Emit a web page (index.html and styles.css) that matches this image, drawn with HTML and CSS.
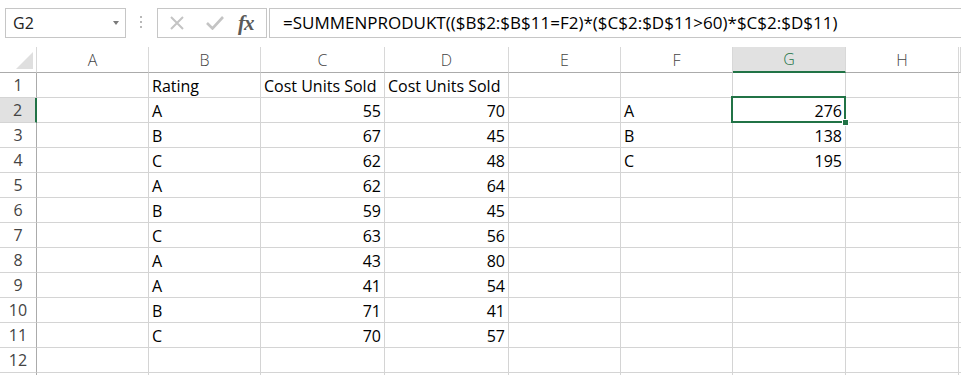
FILE: index.html
```html
<!DOCTYPE html>
<html lang="de">
<head>
    <meta charset="UTF-8">
    <title>SUMMENPRODUKT</title>
    <link rel="stylesheet" href="styles.css">
</head>
<body>

    <!-- Formula bar -->
    <div class="formula-bar">
        <div class="name-box">
            <span>G2</span>
            <span class="drop-arrow"></span>
        </div>
        <div class="grip"><i></i><i></i><i></i></div>
        <div class="fx-buttons">
            <svg class="btn-cancel" width="14" height="14" viewBox="0 0 14 14">
                <path d="M1 1 L13 13 M13 1 L1 13" stroke="#c4c4c4" stroke-width="2" fill="none"/>
            </svg>
            <svg class="btn-enter" width="18" height="14" viewBox="0 0 18 14">
                <path d="M1 7 L6.5 12.5 L17 1" stroke="#c4c4c4" stroke-width="2.6" fill="none"/>
            </svg>
            <span class="btn-fx">fx</span>
        </div>
        <div class="formula-input">=SUMMENPRODUKT(($B$2:$B$11=F2)*($C$2:$D$11&gt;60)*$C$2:$D$11)</div>
    </div>

    <!-- Sheet -->
    <div class="sheet">
        <div class="row head-row">
            <div class="corner"><span class="corner-tri"></span></div>
            <div class="col-head">A</div>
            <div class="col-head">B</div>
            <div class="col-head">C</div>
            <div class="col-head">D</div>
            <div class="col-head">E</div>
            <div class="col-head">F</div>
            <div class="col-head active">G</div>
            <div class="col-head">H</div>
            <div class="col-head"></div>
        </div>
        <div class="row">
            <div class="row-head">1</div>
            <div class="cell"></div>
            <div class="cell">Rating</div>
            <div class="cell">Cost Units Sold</div>
            <div class="cell">Cost Units Sold</div>
            <div class="cell"></div><div class="cell"></div><div class="cell"></div><div class="cell"></div><div class="cell"></div>
        </div>
        <div class="row">
            <div class="row-head active">2</div>
            <div class="cell"></div>
            <div class="cell">A</div>
            <div class="cell num">55</div>
            <div class="cell num">70</div>
            <div class="cell"></div>
            <div class="cell">A</div>
            <div class="cell num selected">276</div>
            <div class="cell"></div><div class="cell"></div>
        </div>
        <div class="row">
            <div class="row-head">3</div>
            <div class="cell"></div>
            <div class="cell">B</div>
            <div class="cell num">67</div>
            <div class="cell num">45</div>
            <div class="cell"></div>
            <div class="cell">B</div>
            <div class="cell num">138</div>
            <div class="cell"></div><div class="cell"></div>
        </div>
        <div class="row">
            <div class="row-head">4</div>
            <div class="cell"></div>
            <div class="cell">C</div>
            <div class="cell num">62</div>
            <div class="cell num">48</div>
            <div class="cell"></div>
            <div class="cell">C</div>
            <div class="cell num">195</div>
            <div class="cell"></div><div class="cell"></div>
        </div>
        <div class="row">
            <div class="row-head">5</div>
            <div class="cell"></div>
            <div class="cell">A</div>
            <div class="cell num">62</div>
            <div class="cell num">64</div>
            <div class="cell"></div><div class="cell"></div><div class="cell"></div><div class="cell"></div><div class="cell"></div>
        </div>
        <div class="row">
            <div class="row-head">6</div>
            <div class="cell"></div>
            <div class="cell">B</div>
            <div class="cell num">59</div>
            <div class="cell num">45</div>
            <div class="cell"></div><div class="cell"></div><div class="cell"></div><div class="cell"></div><div class="cell"></div>
        </div>
        <div class="row">
            <div class="row-head">7</div>
            <div class="cell"></div>
            <div class="cell">C</div>
            <div class="cell num">63</div>
            <div class="cell num">56</div>
            <div class="cell"></div><div class="cell"></div><div class="cell"></div><div class="cell"></div><div class="cell"></div>
        </div>
        <div class="row">
            <div class="row-head">8</div>
            <div class="cell"></div>
            <div class="cell">A</div>
            <div class="cell num">43</div>
            <div class="cell num">80</div>
            <div class="cell"></div><div class="cell"></div><div class="cell"></div><div class="cell"></div><div class="cell"></div>
        </div>
        <div class="row">
            <div class="row-head">9</div>
            <div class="cell"></div>
            <div class="cell">A</div>
            <div class="cell num">41</div>
            <div class="cell num">54</div>
            <div class="cell"></div><div class="cell"></div><div class="cell"></div><div class="cell"></div><div class="cell"></div>
        </div>
        <div class="row">
            <div class="row-head">10</div>
            <div class="cell"></div>
            <div class="cell">B</div>
            <div class="cell num">71</div>
            <div class="cell num">41</div>
            <div class="cell"></div><div class="cell"></div><div class="cell"></div><div class="cell"></div><div class="cell"></div>
        </div>
        <div class="row">
            <div class="row-head">11</div>
            <div class="cell"></div>
            <div class="cell">C</div>
            <div class="cell num">70</div>
            <div class="cell num">57</div>
            <div class="cell"></div><div class="cell"></div><div class="cell"></div><div class="cell"></div><div class="cell"></div>
        </div>
        <div class="row">
            <div class="row-head">12</div>
            <div class="cell"></div><div class="cell"></div><div class="cell"></div><div class="cell"></div>
            <div class="cell"></div><div class="cell"></div><div class="cell"></div><div class="cell"></div><div class="cell"></div>
        </div>
        <div class="row">
            <div class="row-head"></div>
            <div class="cell"></div><div class="cell"></div><div class="cell"></div><div class="cell"></div>
            <div class="cell"></div><div class="cell"></div><div class="cell"></div><div class="cell"></div><div class="cell"></div>
        </div>
    </div>

</body>
</html>
```

FILE: styles.css
```css
/* Global */
body {
    margin: 0;
    padding: 0;
    background-color: #ffffff;
    font-family: 'Open Sans', 'Noto Sans', sans-serif;
    font-size: 16px;
    color: #000;
    overflow: hidden;
}

/* Formula bar */
.formula-bar {
    display: flex;
    align-items: flex-start;
    height: 47px;
    box-sizing: border-box;
    padding-top: 8px;
}

.name-box {
    display: flex;
    align-items: center;
    justify-content: space-between;
    box-sizing: border-box;
    width: 121px;
    height: 30px;
    margin-left: 5px;
    padding: 0 6px 0 7px;
    border: 1px solid #c6c6c6;
    color: #222;
}

.drop-arrow {
    width: 0;
    height: 0;
    border-left: 3px solid transparent;
    border-right: 3px solid transparent;
    border-top: 4px solid #7a7a7a;
}

.grip {
    display: flex;
    flex-direction: column;
    gap: 3px;
    width: 3px;
    margin: 8px 0 0 14px;
}

.grip i {
    width: 2px;
    height: 2px;
    background-color: #b8b8b8;
}

.fx-buttons {
    display: flex;
    align-items: center;
    box-sizing: border-box;
    width: 110px;
    height: 30px;
    margin-left: 14px;
    padding-left: 10px;
    border: 1px solid #c6c6c6;
}

.btn-cancel {
    margin-left: 2px;
}

.btn-enter {
    margin-left: 22px;
}

.btn-fx {
    margin-left: 14px;
    font-family: 'Liberation Serif', serif;
    font-style: italic;
    font-weight: bold;
    font-size: 21px;
    color: #5a5a5a;
    letter-spacing: -1px;
}

.formula-input {
    flex: 1;
    box-sizing: border-box;
    height: 30px;
    margin-left: 2px;
    margin-right: -4px;
    padding: 2px 0 0 13px;
    border: 1px solid #c6c6c6;
    color: #000;
    font-size: 17px;
    white-space: nowrap;
}

/* Sheet grid */
.row {
    display: grid;
    grid-template-columns: 37px 112px 112px 124px 124px 112px 112px 113px 113px 1fr;
    height: 25px;
}

.head-row {
    height: 26px;
}

.row > div {
    box-sizing: border-box;
    border-right: 1px solid #d4d4d4;
    border-bottom: 1px solid #d4d4d4;
    display: flex;
    align-items: center;
    white-space: nowrap;
}

.corner {
    position: relative;
}

.corner-tri {
    position: absolute;
    right: 3px;
    bottom: 3px;
    width: 0;
    height: 0;
    border-left: 17px solid transparent;
    border-bottom: 17px solid #dfdfdf;
}

.head-row > div {
    border-bottom-color: #ababab;
    border-right-color: #d8d8d8;
}

.col-head {
    justify-content: center;
    color: #444;
    font-weight: 300;
}

.col-head.active {
    background-color: #e1e1e1;
    color: #217346;
    border-bottom: 2px solid #217346 !important;
}

.row-head {
    justify-content: center;
    color: #444;
    border-right-color: #ababab !important;
}

.row-head.active {
    background-color: #e1e1e1;
    border-right: 2px solid #217346 !important;
}

.cell {
    padding: 1px 3px 0 3px;
}

.cell.num {
    justify-content: flex-end;
}

/* Active cell */
.cell.selected {
    position: relative;
}

.cell.selected::after {
    content: "";
    position: absolute;
    top: -2px;
    left: -2px;
    right: -1px;
    bottom: -1px;
    border: 2px solid #217346;
}

.cell.selected::before {
    content: "";
    position: absolute;
    right: -4px;
    bottom: -4px;
    width: 5px;
    height: 5px;
    background-color: #217346;
    border: 1px solid #ffffff;
    z-index: 2;
}
```
